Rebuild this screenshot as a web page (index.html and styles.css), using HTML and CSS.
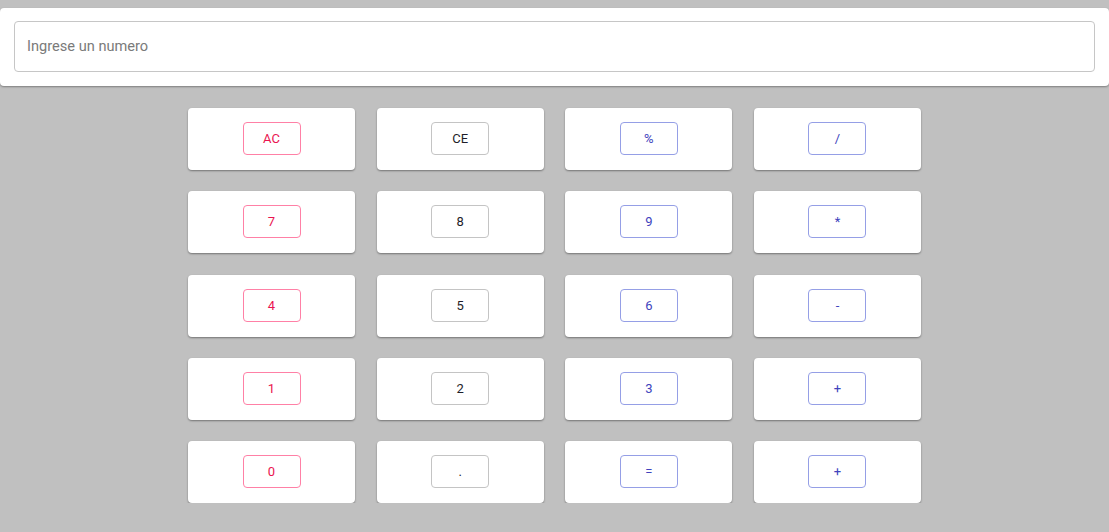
FILE: index.html
```html
<!DOCTYPE html>
<html lang="es">
<head>
<meta charset="utf-8">
<title>Calculadora</title>
<link rel="stylesheet" href="styles.css">
</head>
<body>
  <div class="top-card">
    <input class="display" type="text" placeholder="Ingrese un numero">
  </div>
  <div class="pad">
    <div class="key"><button class="btn danger">AC</button></div>
    <div class="key"><button class="btn dark">CE</button></div>
    <div class="key"><button class="btn primary">%</button></div>
    <div class="key"><button class="btn primary">/</button></div>

    <div class="key"><button class="btn danger">7</button></div>
    <div class="key"><button class="btn dark">8</button></div>
    <div class="key"><button class="btn primary">9</button></div>
    <div class="key"><button class="btn primary">*</button></div>

    <div class="key"><button class="btn danger">4</button></div>
    <div class="key"><button class="btn dark">5</button></div>
    <div class="key"><button class="btn primary">6</button></div>
    <div class="key"><button class="btn primary">-</button></div>

    <div class="key"><button class="btn danger">1</button></div>
    <div class="key"><button class="btn dark">2</button></div>
    <div class="key"><button class="btn primary">3</button></div>
    <div class="key"><button class="btn primary">+</button></div>

    <div class="key"><button class="btn danger">0</button></div>
    <div class="key"><button class="btn dark">.</button></div>
    <div class="key"><button class="btn primary">=</button></div>
    <div class="key"><button class="btn primary">+</button></div>
  </div>
</body>
</html>
```
FILE: styles.css
```css
html, body {
  margin: 0;
  padding: 0;
  background: #c0c0c0;
  font-family: Roboto, "Liberation Sans", Arial, sans-serif;
}

body {
  padding-top: 8px;
}

.top-card {
  background: #ffffff;
  border-radius: 4px;
  box-shadow: 0 1px 2px rgba(0, 0, 0, 0.35);
  padding: 13px 14px 14px;
}

.display {
  display: block;
  box-sizing: border-box;
  width: 100%;
  height: 51px;
  border: 1px solid #c6c6c6;
  border-radius: 4px;
  padding: 0 12px 2px;
  font-family: Roboto, "Liberation Sans", Arial, sans-serif;
  font-size: 14.6px;
  color: #333;
  background: #fff;
  outline: none;
}

.display::placeholder {
  color: #7a7a7a;
}

.pad {
  width: 733px;
  margin: 22px auto 0;
  display: grid;
  grid-template-columns: repeat(4, 167px);
  column-gap: 21.67px;
  row-gap: 21.25px;
}

.key {
  height: 62px;
  background: #ffffff;
  border-radius: 4px;
  box-shadow: 0 1px 2px rgba(0, 0, 0, 0.4);
  display: flex;
  justify-content: center;
  align-items: flex-start;
  padding-top: 14px;
  box-sizing: border-box;
}

.btn {
  width: 58px;
  height: 33px;
  border-radius: 4px;
  background: #ffffff;
  border: 1px solid;
  font-family: Roboto, "Liberation Sans", Arial, sans-serif;
  font-size: 13px;
  font-weight: 400;
  padding: 0;
  cursor: pointer;
}

.danger {
  color: #ea1450;
  border-color: #ff80a6;
}

.dark {
  color: #1e1e2a;
  border-color: #c4c4c4;
}

.primary {
  color: #4043bd;
  border-color: #959fe6;
}
```
